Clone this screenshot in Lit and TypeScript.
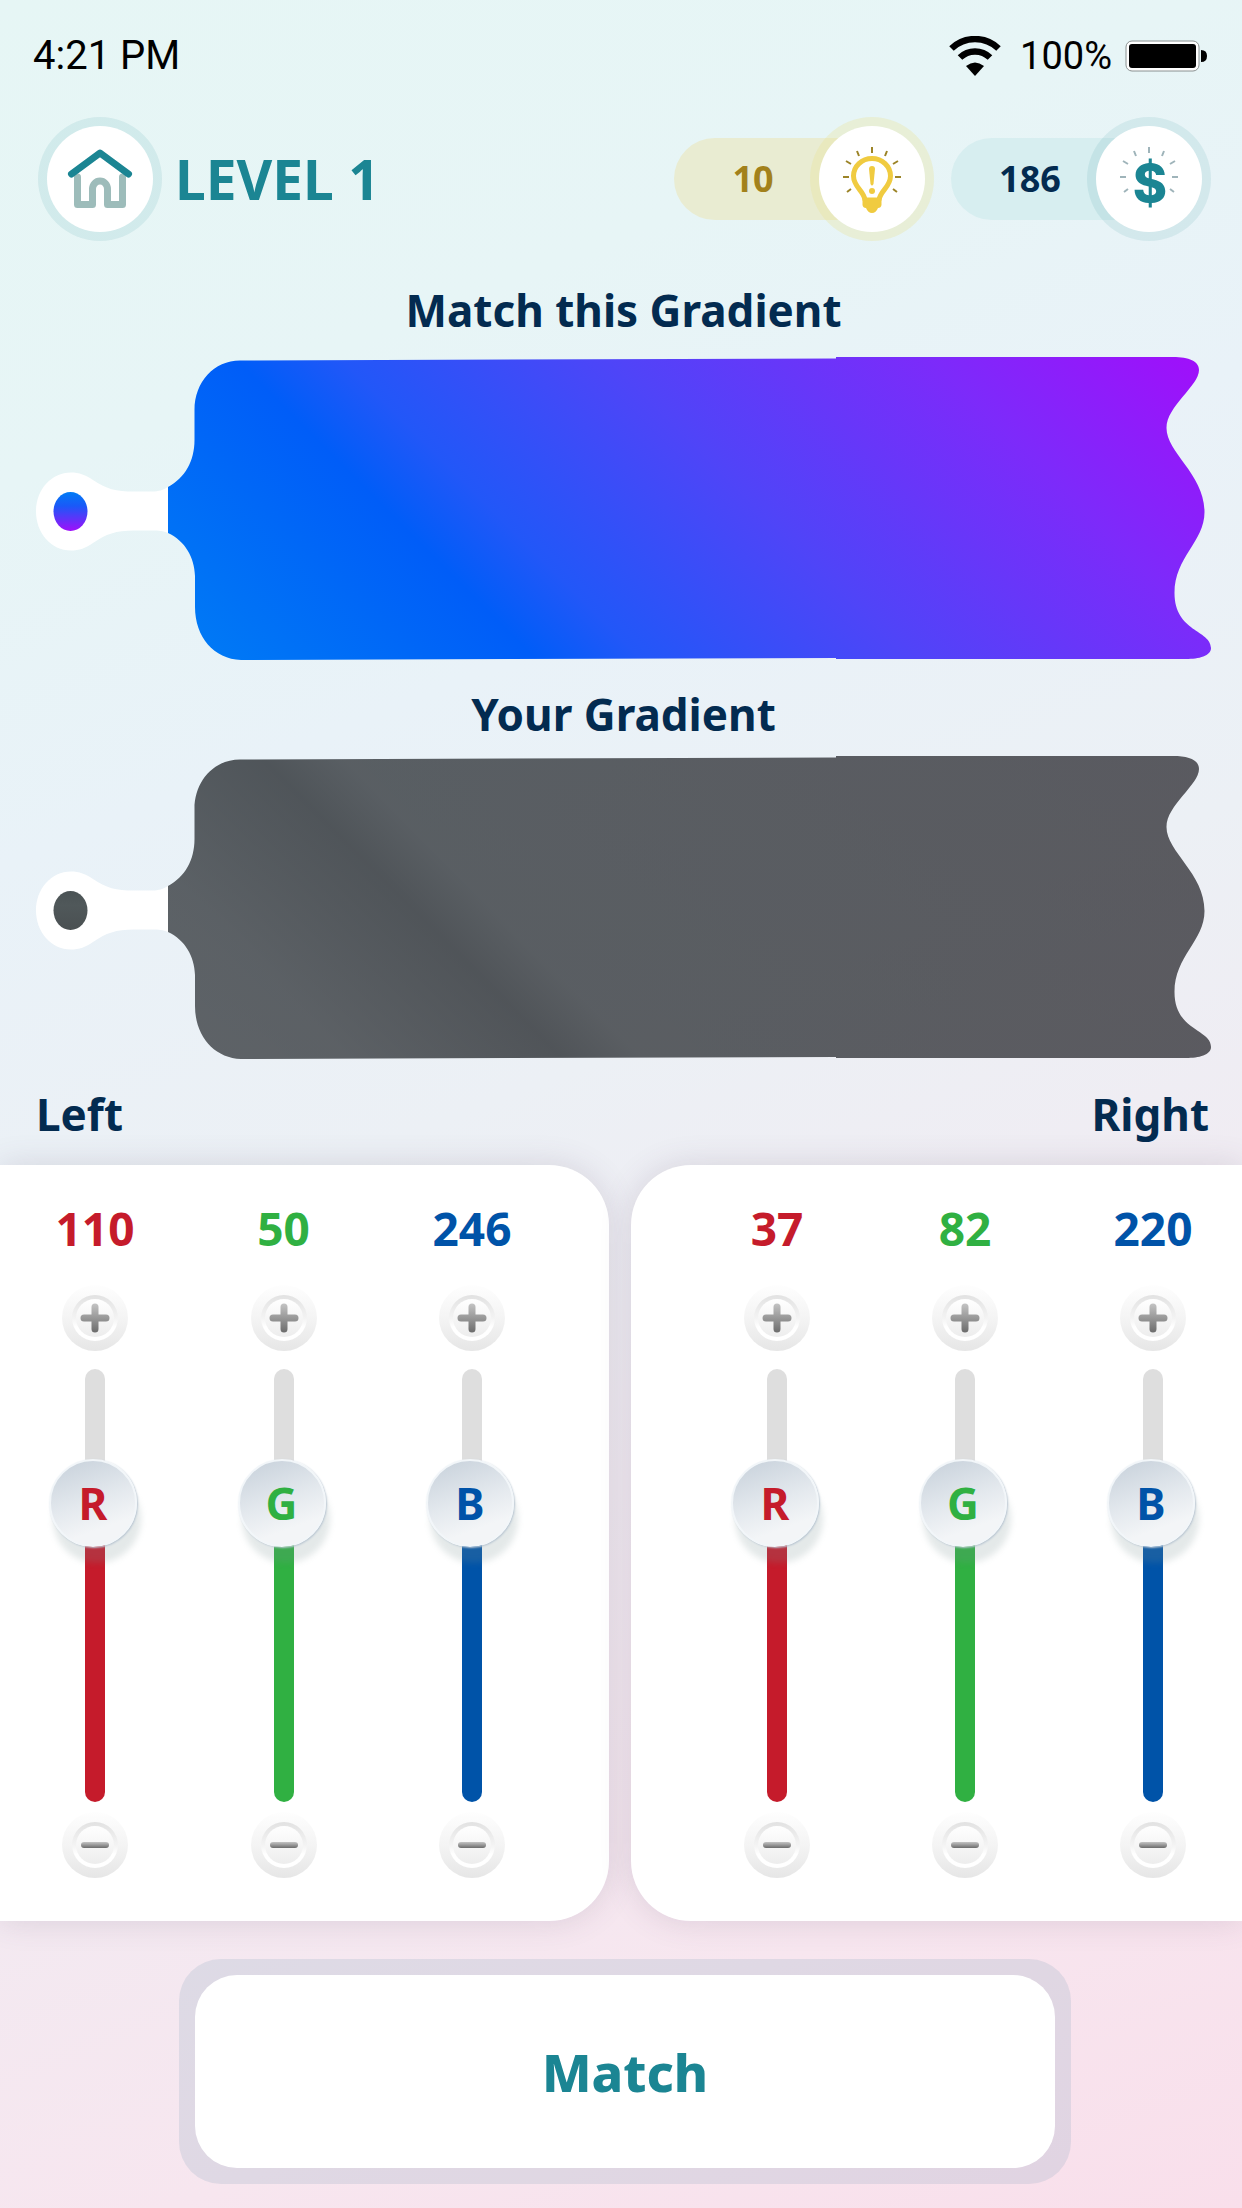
import { css, html, LitElement, svg } from "lit";
import { customElement, property, state } from "lit/decorators.js";
import { classMap } from "lit/directives/class-map.js";
import { styleMap } from "lit/directives/style-map.js";

type Side = "left" | "right";
type ChannelKey = "r" | "g" | "b";

interface Channel {
  key: ChannelKey;
  name: string;
  value: number;
}

const RAYS = svg`
  <path
    d="M53 21v6M38 25l2 5M68 25l-2 5M27 35l5 3M79 35l-5 3M24 51h6M82 51h-6M28 66l4 -3M78 66l-4 -3"
    fill="none"
    stroke="currentColor"
    stroke-width="2"
  />
`;

@customElement("gradient-board")
class GradientBoard extends LitElement {
  @property({ type: Boolean }) muted = false;

  static styles = css`
    :host {
      display: block;
    }
    svg {
      display: block;
      width: 100%;
      height: auto;
    }
  `;

  vividStops() {
    return svg`
      <stop offset="0" stop-color="#007cf5" />
      <stop offset="0.27" stop-color="#005df8" />
      <stop offset="0.35" stop-color="#2257f8" />
      <stop offset="0.56" stop-color="#5044f8" />
      <stop offset="0.8" stop-color="#7d2afa" />
      <stop offset="1" stop-color="#a00ffa" />
    `;
  }

  mutedStops() {
    return svg`
      <stop offset="0" stop-color="#000408" stop-opacity="0.6" />
      <stop offset="0.13" stop-color="#000408" stop-opacity="0.61" />
      <stop offset="0.29" stop-color="#000408" stop-opacity="0.66" />
      <stop offset="0.35" stop-color="#000408" stop-opacity="0.62" />
      <stop offset="1" stop-color="#040208" stop-opacity="0.63" />
    `;
  }

  render() {
    return html`
      <svg viewBox="0 0 1175 303" aria-hidden="true">
        <defs>
          <linearGradient
            id="paint"
            gradientUnits="userSpaceOnUse"
            x1="144"
            y1="303"
            x2="805"
            y2="-358"
          >
            ${this.muted ? this.mutedStops() : this.vividStops()}
          </linearGradient>
          <linearGradient id="hole" x1="0" y1="0" x2="0" y2="1">
            <stop offset="0" stop-color=${this.muted ? "#4a5254" : "#007cf5"} />
            <stop offset="0.36" stop-color=${this.muted ? "#50585a" : "#1a59f8"} />
            <stop offset="1" stop-color=${this.muted ? "#4a5052" : "#a00ffa"} />
          </linearGradient>
        </defs>
        <path
          fill="#fff"
          d="M35 115.500C43 115.500 50 118 57 123C70 132 80 134.500 98 134.500H116C123 134.500 127 133 132 130V176C127 174 123 173.500 116 173.500H98C80 173.500 70 177 57 186C50 191 43 193.500 35 193.500C15 193.500 0 176 0 154.500S15 115.500 35 115.500Z"
        />
        <ellipse cx="34.500" cy="154.500" rx="17" ry="19.500" fill="url(#hole)" />
        <path
          fill="url(#paint)"
          d="M132 130C149 121 158.500 104 158.500 83V53C158.500 25 178 3.500 204 3.500L800 1.500V0H1137C1153 0 1163 4 1163 13C1163 29 1130.500 49 1130.500 71C1130.500 96 1168.500 117 1168.500 155C1168.500 185 1138.500 200 1138.500 236C1138.500 275 1175 273 1175 291C1175 299 1163 302 1150 302H800V301L205 303C178 302 159 280 159 250V219C158.500 200 149 184 132 176Z"
        />
      </svg>
    `;
  }
}

@customElement("channel-slider")
class ChannelSlider extends LitElement {
  @property() channel: ChannelKey = "r";
  @property() name = "";
  @property({ type: Number }) value = 0;
  @state() position = 74;

  static styles = css`
    :host {
      display: flex;
      flex-direction: column;
      align-items: center;
      width: 140px;
    }
    .r {
      --channel-color: #c51b2b;
    }
    .g {
      --channel-color: #30b042;
    }
    .b {
      --channel-color: #0053a8;
    }
    .channel {
      display: contents;
    }
    .value {
      font-size: 46px;
      line-height: 60px;
      font-weight: 700;
      color: var(--channel-color);
    }
    .step {
      display: grid;
      place-items: center;
      width: 66px;
      height: 66px;
      padding: 0;
      border: 0;
      border-radius: 50%;
      background: linear-gradient(#fefefe, #f4f4f4 50%, #e6e6e6);
      cursor: pointer;
    }
    .step svg {
      width: 48px;
      height: 48px;
    }
    .plus {
      margin: 27px 0 18px;
    }
    .minus {
      margin-top: 10px;
    }
    .slider {
      position: relative;
      display: flex;
      justify-content: center;
      width: 88px;
      height: 433px;
    }
    input {
      appearance: none;
      writing-mode: vertical-lr;
      direction: rtl;
      width: 20px;
      height: 100%;
      margin: 0;
      background: none;
      cursor: pointer;
    }
    input::-webkit-slider-runnable-track {
      width: 20px;
      height: 100%;
      border-radius: 10px;
      background: linear-gradient(
        to top,
        var(--channel-color) var(--fill),
        #dedede var(--fill)
      );
    }
    input::-webkit-slider-thumb {
      appearance: none;
      width: 88px;
      height: 88px;
      margin-left: -36px;
      border: 2px solid #f2f6f9;
      border-radius: 50%;
      background: linear-gradient(160deg, #c6d0da, #e4e9ee 48%, #f3f5f7 75%);
      box-shadow:
        1px 1px 2px #b9c6d2,
        4px 16px 6px rgba(120, 145, 145, 0.2);
    }
    /* rides on the thumb, which travels the track minus its own height */
    .letter {
      position: absolute;
      left: -2px;
      bottom: calc((100% - 88px) * var(--ratio));
      width: 88px;
      font-size: 44px;
      line-height: 88px;
      font-weight: 700;
      text-align: center;
      color: var(--channel-color);
      pointer-events: none;
    }
  `;

  step(amount: number) {
    this.value = Math.min(255, Math.max(0, this.value + amount));
  }

  onInput(e: Event) {
    const next = Number((e.target as HTMLInputElement).value);
    this.step(Math.round((next - this.position) * 2.55));
    this.position = next;
  }

  stepIcon(plus: boolean) {
    return html`
      <svg viewBox="0 0 48 48" aria-hidden="true">
        <defs>
          <linearGradient id="ring" x1="0" y1="0" x2="0" y2="1">
            <stop offset="0" stop-color="#e2e2e2" />
            <stop offset="0.5" stop-color="#f3f3f3" />
            <stop offset="0.7" stop-color="#fff" />
          </linearGradient>
          <linearGradient id="face" x1="0" y1="0" x2="0" y2="1">
            <stop offset="0" stop-color="#fff" />
            <stop offset="1" stop-color="#ededed" />
          </linearGradient>
          <linearGradient id="sign" x1="0" y1="0" x2="0" y2="1">
            <stop offset="0" stop-color="#c4c4c4" />
            <stop offset="1" stop-color="#6c6c6c" />
          </linearGradient>
        </defs>
        <circle cx="24" cy="24" r="23" fill="url(#ring)" />
        <circle cx="24" cy="24" r="19" fill="url(#face)" />
        ${plus
          ? svg`<path fill="url(#sign)" d="M20.500 13a3.500 3.500 0 0 1 7 0v7.500h7.500a3.500 3.500 0 0 1 0 7h-7.500V35a3.500 3.500 0 0 1 -7 0v-7.500H13a3.500 3.500 0 0 1 0 -7h7.500Z" />`
          : svg`<rect x="10" y="21" width="28" height="6" rx="3" fill="url(#sign)" />`}
      </svg>
    `;
  }

  render() {
    const ratio = this.position / 100;
    const fill = `calc(44px + (100% - 88px) * ${ratio})`;
    return html`
      <div class=${classMap({ channel: true, [this.channel]: true })}>
        <output class="value" for="range">${this.value}</output>
        <button
          class="step plus"
          aria-label="Increase ${this.name}"
          @click=${() => this.step(1)}
        >
          ${this.stepIcon(true)}
        </button>
        <div class="slider" style=${styleMap({ "--ratio": `${ratio}`, "--fill": fill })}>
          <input
            id="range"
            type="range"
            min="0"
            max="100"
            .value=${String(this.position)}
            @input=${this.onInput}
          />
          <label class="letter" for="range">${this.channel.toUpperCase()}</label>
        </div>
        <button
          class="step minus"
          aria-label="Decrease ${this.name}"
          @click=${() => this.step(-1)}
        >
          ${this.stepIcon(false)}
        </button>
      </div>
    `;
  }
}

@customElement("app-root")
class AppRoot extends LitElement {
  @state() channels: Record<Side, Channel[]> = {
    left: [
      { key: "r", name: "red", value: 110 },
      { key: "g", name: "green", value: 50 },
      { key: "b", name: "blue", value: 246 },
    ],
    right: [
      { key: "r", name: "red", value: 37 },
      { key: "g", name: "green", value: 82 },
      { key: "b", name: "blue", value: 220 },
    ],
  };

  static styles = css`
    :host {
      --teal: #1b8593;
      --navy: #032b50;
      display: block;
      box-sizing: border-box;
      min-height: 100vh;
      padding-bottom: 24px;
      overflow: hidden;
      background: linear-gradient(
        158deg,
        #e6f6f5,
        #e7f5f6 18%,
        #e9f2f8 32%,
        #ecf0f5 48%,
        #f1ebf2 64%,
        #f7e6ef 84%,
        #f9dfeb
      );
      font-family: "Noto Sans", sans-serif;
      color: var(--navy);
    }
    .status {
      display: flex;
      align-items: center;
      justify-content: space-between;
      padding: 32px 35px 0 33px;
      font-family: Roboto, sans-serif;
      font-size: 40px;
      line-height: 48px;
      color: #000;
    }
    .indicators {
      display: flex;
      align-items: center;
      gap: 13px;
    }
    .indicators svg {
      display: block;
    }
    .charge {
      padding-left: 6px;
      font-size: 38px;
    }
    .header {
      display: flex;
      align-items: center;
      padding: 37px 31px 0 38px;
    }
    .badge {
      position: relative;
      display: grid;
      box-sizing: border-box;
      width: 124px;
      height: 124px;
      padding: 9px;
      border: 0;
      border-radius: 50%;
      background: rgba(27, 133, 147, 0.1);
    }
    .badge svg {
      display: block;
      width: 106px;
      height: 106px;
      border-radius: 50%;
      background: #fff;
    }
    .home {
      cursor: pointer;
    }
    .level {
      flex: 1;
      margin: 0;
      padding-left: 13px;
      font-size: 55px;
      line-height: 60px;
      font-weight: 700;
      color: var(--teal);
    }
    .counters {
      display: flex;
      gap: 17px;
    }
    .counter {
      position: relative;
      display: flex;
      align-items: center;
      width: 260px;
    }
    /* pill that runs under the round badge */
    .counter::before {
      content: "";
      position: absolute;
      inset: 21px 62px 21px 0;
      border-radius: 41px 0 0 41px;
      background: #d7eef0;
    }
    .hint::before {
      background: #e9ecd2;
    }
    .amount {
      position: relative;
      flex: 1;
      padding-left: 22px;
      font-size: 36px;
      line-height: 60px;
      font-weight: 700;
      text-align: center;
    }
    .hint .amount {
      color: #a2811b;
    }
    .hint .badge {
      background: rgba(232, 226, 150, 0.32);
    }
    .hint-rays {
      color: #9c8428;
    }
    .coin-rays {
      color: #9fb4ba;
    }
    .dollar {
      font-family: Inter, "Liberation Sans", sans-serif;
      font-size: 52px;
      font-weight: 800;
      fill: var(--teal);
    }
    h2 {
      margin: 0;
      font-size: 44px;
      line-height: 60px;
      font-weight: 700;
    }
    .boards {
      padding: 39px 31px 0 36px;
      text-align: center;
    }
    .target {
      padding: 17px 0 24px;
    }
    .mine {
      padding-top: 12px;
    }
    .sides {
      display: flex;
      justify-content: space-between;
      padding: 25px 33px 21px 36px;
    }
    .panels {
      display: grid;
      grid-template-columns: 609fr 611fr;
      gap: 22px;
    }
    .panel {
      display: flex;
      justify-content: space-between;
      padding-top: 33px;
      padding-bottom: 43px;
      background: #fff;
      box-shadow: 0 0 32px rgba(90, 70, 100, 0.16);
    }
    .left {
      padding-left: 25px;
      padding-right: 67px;
      border-radius: 0 60px 60px 0;
    }
    .right {
      padding-left: 76px;
      padding-right: 19px;
      border-radius: 60px 0 0 60px;
    }
    .submit {
      margin: 38px 171px 0 179px;
      padding: 16px;
      border-radius: 42px;
      background: rgba(140, 170, 190, 0.22);
    }
    .match {
      display: block;
      width: 100%;
      padding: 67px 0 66px;
      border: 0;
      border-radius: 42px;
      background: #fff;
      font-family: inherit;
      font-size: 52px;
      line-height: 60px;
      font-weight: 800;
      color: var(--teal);
      cursor: pointer;
    }
  `;

  renderStatus() {
    return html`
      <div class="status">
        <span>4:21 PM</span>
        <div class="indicators">
          <svg width="52" height="40" viewBox="0 0 52 40" role="img" aria-label="Wi-Fi">
            <path
              d="M2.500 12.500A34 34 0 0 1 49.500 12.500M11 21.500A21.500 21.500 0 0 1 41 21.500"
              fill="none"
              stroke="#000"
              stroke-width="6.500"
            />
            <path d="M26 40L17 30Q26 23 35 30Z" />
          </svg>
          <span class="charge">100%</span>
          <svg width="82" height="32" viewBox="0 0 82 32" role="img" aria-label="Battery full">
            <rect x="1" y="1" width="73" height="30" rx="6" fill="#fff" stroke="#8a9090" />
            <rect x="4" y="4" width="67" height="24" rx="3" />
            <path d="M76 10Q82 10 82 16T76 22Z" />
          </svg>
        </div>
      </div>
    `;
  }

  renderHeader() {
    return html`
      <header class="header">
        <button class="badge home" aria-label="Home">
          <svg viewBox="0 0 106 106" aria-hidden="true">
            <path
              d="M30.500 51V78.500H45.500V63A7.500 8 0 0 1 60.500 63V78.500H75.500V51"
              fill="none"
              stroke="#9dbcba"
              stroke-width="7"
              stroke-linecap="round"
              stroke-linejoin="round"
            />
            <path
              d="M24.500 48L53 27L81.500 48"
              fill="none"
              stroke="#1b8593"
              stroke-width="7"
              stroke-linecap="round"
              stroke-linejoin="round"
            />
          </svg>
        </button>
        <h1 class="level">LEVEL 1</h1>
        <div class="counters">
          <div class="counter hint">
            <span class="amount">10</span>
            <span class="badge">
              <svg class="hint-rays" viewBox="0 0 106 106" aria-hidden="true">
                ${RAYS}
                <path
                  d="M46 74C45 65 34.500 61 34.500 50A18.500 17.500 0 0 1 71.500 50C71.500 61 61 65 60 74Z"
                  fill="#fff"
                  stroke="#f0cb40"
                  stroke-width="5"
                  stroke-linejoin="round"
                />
                <path d="M43.500 72H62.500V79Q62 82 59 82Q57 87 53 87T47 82Q44 82 43.500 79Z" fill="#f0cb40" />
                <path d="M50 43Q50 40 53 40T56 43L54.500 58Q53 61 51.500 58Z" fill="#f0cb40" />
                <circle cx="53" cy="65" r="3" fill="#f0cb40" />
              </svg>
            </span>
          </div>
          <div class="counter coin">
            <span class="amount">186</span>
            <span class="badge">
              <svg class="coin-rays" viewBox="0 0 106 106" aria-hidden="true">
                ${RAYS}
                <text class="dollar" x="54" y="76" text-anchor="middle">$</text>
              </svg>
            </span>
          </div>
        </div>
      </header>
    `;
  }

  renderPanel(side: Side) {
    return html`
      <section class="panel ${side}" aria-labelledby="${side}-title">
        ${this.channels[side].map(
          (c) => html`
            <channel-slider
              .channel=${c.key}
              .name=${c.name}
              .value=${c.value}
            ></channel-slider>
          `
        )}
      </section>
    `;
  }

  render() {
    return html`
      ${this.renderStatus()} ${this.renderHeader()}
      <main>
        <div class="boards">
          <h2>Match this Gradient</h2>
          <gradient-board class="target"></gradient-board>
          <h2>Your Gradient</h2>
          <gradient-board class="mine" muted></gradient-board>
        </div>
        <div class="sides">
          <h2 id="left-title">Left</h2>
          <h2 id="right-title">Right</h2>
        </div>
        <div class="panels">
          ${this.renderPanel("left")} ${this.renderPanel("right")}
        </div>
        <div class="submit">
          <button class="match">Match</button>
        </div>
      </main>
    `;
  }
}
